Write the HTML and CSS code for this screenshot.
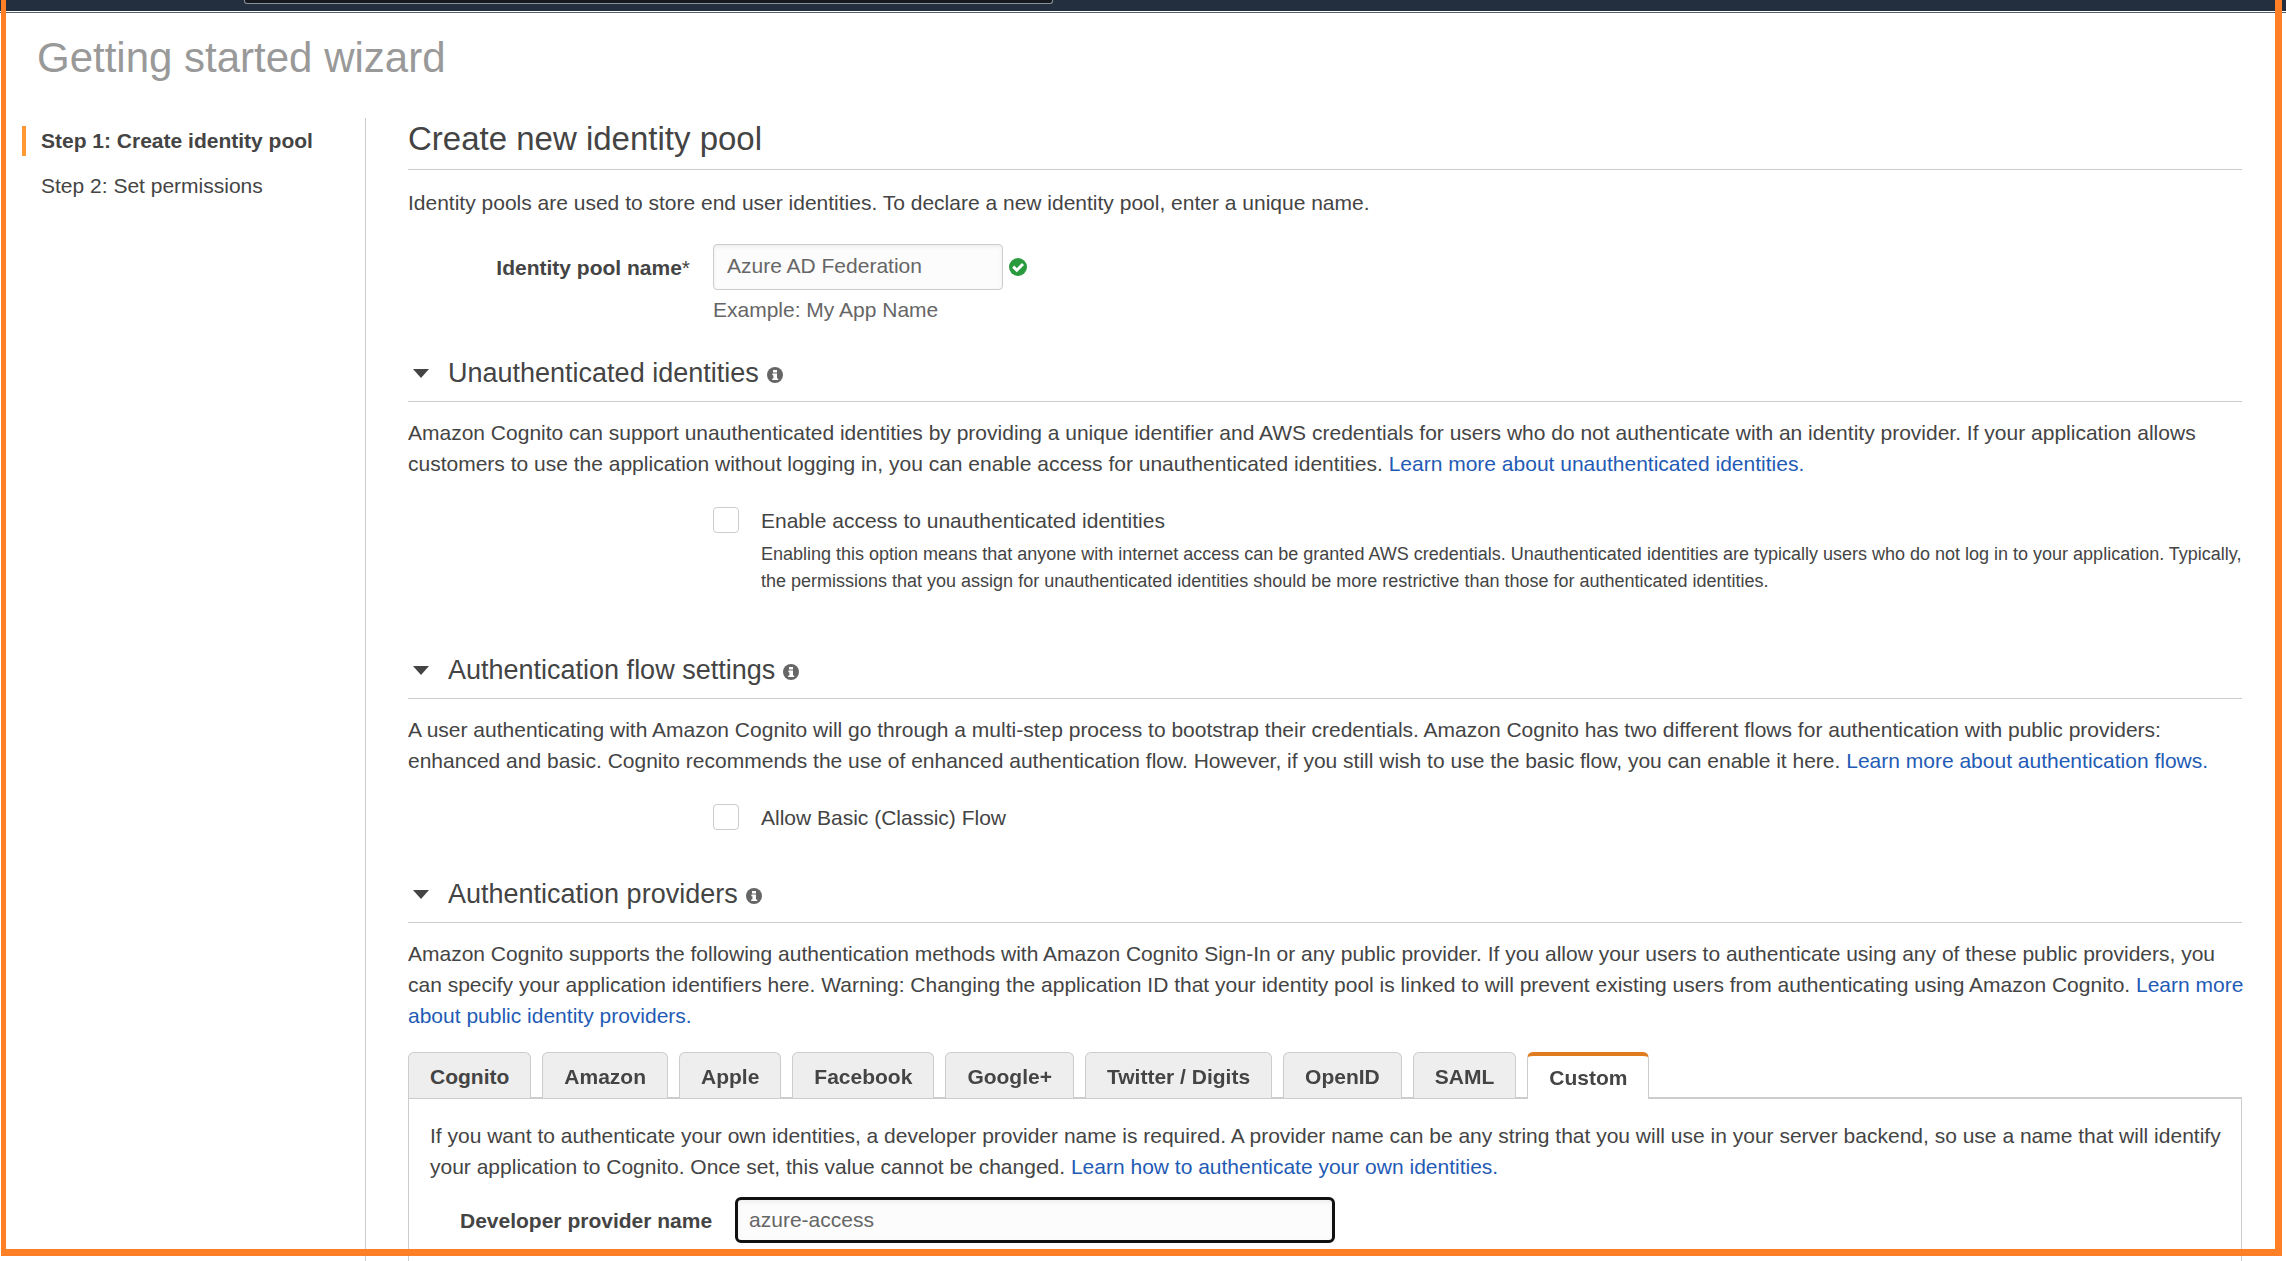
FILE: index.html
```html
<!DOCTYPE html>
<html lang="en">
<head>
<meta charset="utf-8">
<meta name="viewport" content="width=device-width, initial-scale=1">
<title>Getting started wizard</title>
<link rel="stylesheet" href="styles.css">
</head>
<body>
<svg class="sprite" aria-hidden="true">
  <symbol id="info" viewBox="0 0 16 16">
    <circle cx="8" cy="8" r="8" fill="#666"/>
    <path d="M6 3h4v2.6H6zM5.4 6.6H10v4.8h1.2V13H5.2v-1.6h1.2V8.2h-1z" fill="#fff"/>
  </symbol>
  <symbol id="caret" viewBox="0 0 16 9">
    <path d="M0 0h16L8 9z" fill="#444"/>
  </symbol>
</svg>
<header class="topbar"><div class="search"></div></header>
<div class="page">
  <h1 class="page-title">Getting started wizard</h1>
  <div class="columns">
    <nav class="steps">
      <a class="step current" href="#step1">Step 1: Create identity pool</a>
      <a class="step" href="#step2">Step 2: Set permissions</a>
    </nav>
    <main class="content">
      <h2 class="main-title">Create new identity pool</h2>
      <p class="text intro">Identity pools are used to store end user identities. To declare a new identity pool, enter a unique name.</p>
      <div class="field">
        <label class="label" for="pool">Identity pool name<span class="required">*</span></label>
        <div class="control">
          <div class="input-row">
            <input class="input" id="pool" type="text" value="Azure AD Federation">
            <svg class="valid" viewBox="0 0 18 18" role="img" aria-label="Valid"><circle cx="9" cy="9" r="9" fill="#2a9a3e"/><path d="M4.2 8.6l3.6 3.6 6.2-6.2" fill="none" stroke="#fff" stroke-width="3"/></svg>
          </div>
          <p class="hint">Example: My App Name</p>
        </div>
      </div>

      <section class="section">
        <h3 class="section-title"><svg class="caret"><use href="#caret"/></svg>Unauthenticated identities<svg class="info"><use href="#info"/></svg></h3>
        <p class="text">Amazon Cognito can support unauthenticated identities by providing a unique identifier and AWS credentials for users who do not authenticate with an identity provider. If your application allows customers to use the application without logging in, you can enable access for unauthenticated identities. <a class="link" href="#unauth">Learn more about unauthenticated identities.</a></p>
        <div class="option">
          <input class="check" id="unauth" type="checkbox">
          <div class="option-text">
            <label for="unauth">Enable access to unauthenticated identities</label>
            <p class="small">Enabling this option means that anyone with internet access can be granted AWS credentials. Unauthenticated identities are typically users who do not log in to your application. Typically, the permissions that you assign for unauthenticated identities should be more restrictive than those for authenticated identities.</p>
          </div>
        </div>
      </section>

      <section class="section flow">
        <h3 class="section-title"><svg class="caret"><use href="#caret"/></svg>Authentication flow settings<svg class="info"><use href="#info"/></svg></h3>
        <p class="text">A user authenticating with Amazon Cognito will go through a multi-step process to bootstrap their credentials. Amazon Cognito has two different flows for authentication with public providers: enhanced and basic. Cognito recommends the use of enhanced authentication flow. However, if you still wish to use the basic flow, you can enable it here. <a class="link" href="#flows">Learn more about authentication flows.</a></p>
        <div class="option">
          <input class="check" id="classic" type="checkbox">
          <div class="option-text"><label for="classic">Allow Basic (Classic) Flow</label></div>
        </div>
      </section>

      <section class="section providers">
        <h3 class="section-title"><svg class="caret"><use href="#caret"/></svg>Authentication providers<svg class="info"><use href="#info"/></svg></h3>
        <p class="text">Amazon Cognito supports the following authentication methods with Amazon Cognito Sign-In or any public provider. If you allow your users to authenticate using any of these public providers, you can specify your application identifiers here. Warning: Changing the application ID that your identity pool is linked to will prevent existing users from authenticating using Amazon Cognito. <a class="link" href="#public">Learn more about public identity providers.</a></p>
        <div class="tabs" role="tablist">
          <button class="tab" role="tab">Cognito</button>
          <button class="tab" role="tab">Amazon</button>
          <button class="tab" role="tab">Apple</button>
          <button class="tab" role="tab">Facebook</button>
          <button class="tab" role="tab">Google+</button>
          <button class="tab" role="tab">Twitter / Digits</button>
          <button class="tab" role="tab">OpenID</button>
          <button class="tab" role="tab">SAML</button>
          <button class="tab active" role="tab" aria-selected="true">Custom</button>
        </div>
        <div class="panel" role="tabpanel">
          <p class="text">If you want to authenticate your own identities, a developer provider name is required. A provider name can be any string that you will use in your server backend, so use a name that will identify your application to Cognito. Once set, this value cannot be changed. <a class="link" href="#own">Learn how to authenticate your own identities.</a></p>
          <div class="provider">
            <label class="label" for="developer">Developer provider name</label>
            <input class="input focused" id="developer" type="text" value="azure-access">
          </div>
        </div>
      </section>
    </main>
  </div>
</div>
<div class="frame" aria-hidden="true"></div>
</body>
</html>
```

FILE: styles.css
```css
* { box-sizing: border-box; }

body {
  display: flex;
  flex-direction: column;
  min-height: 100vh;
  margin: 0;
  background: #fff;
  color: #444;
  font: 21px/32px "Liberation Sans", Arial, sans-serif;
}

h1, h2, h3, p { margin: 0; font-weight: normal; }

.sprite { display: none; }

.topbar {
  height: 13px;
  padding: 0 244px;
  background: linear-gradient(#232f3e 11px, #fff 11px, #fff 12px, #545b6b 12px);
}

.search {
  width: 45%;
  height: 4px;
  border: 1px solid #879596;
  border-top: 0;
  border-radius: 0 0 3px 3px;
  background: #16191f;
}

.page {
  display: flex;
  flex: 1;
  flex-direction: column;
  padding: 21px 44px 0 22px;
}

.page-title {
  padding-left: 15px;
  color: #999;
  font-size: 42px;
  line-height: 48px;
}

.columns {
  display: flex;
  flex: 1;
  padding-top: 36px;
}

.steps {
  display: flex;
  flex: none;
  flex-direction: column;
  align-items: flex-start;
  gap: 15px;
  width: 344px;
  padding-top: 8px;
  border-right: 1px solid #ccc;
}

.step {
  padding-left: 15px;
  border-left: 4px solid transparent;
  color: #444;
  line-height: 30px;
  text-decoration: none;
}

.step.current { border-color: #f93; font-weight: bold; }

.content {
  display: flex;
  flex: 1;
  flex-direction: column;
  min-width: 0;
  padding-left: 42px;
}

.main-title {
  padding-bottom: 10px;
  border-bottom: 1px solid #ccc;
  font-size: 33px;
  line-height: 41px;
}

/* Paragraphs run slightly past the rule on the right */
.text { margin-right: -6px; line-height: 31px; }

.intro { padding-top: 17px; }

.field {
  display: grid;
  grid-template-columns: 282px 1fr;
  column-gap: 23px;
  padding-top: 26px;
}

.label { font-weight: bold; line-height: 48px; text-align: right; }
.required { font-weight: normal; }

.input-row { display: flex; align-items: center; gap: 6px; }

.input {
  width: 290px;
  height: 46px;
  padding: 0 13px 2px;
  border: 1px solid #ccc;
  border-radius: 4px;
  background: #fcfcfc;
  box-shadow: inset 0 2px 4px #eee;
  color: #666;
  font: inherit;
}

.input.focused {
  width: 600px;
  padding: 0 11px;
  border: 3px solid #111;
  border-radius: 6px;
}

.valid { width: 18px; height: 18px; }

.hint { padding-top: 4px; color: #666; }

.section { padding-top: 31px; }
.flow { padding-top: 59px; }
.providers { display: flex; flex: 1; flex-direction: column; padding-top: 46px; }

.section-title {
  display: flex;
  align-items: center;
  margin-bottom: 15px;
  padding: 0 0 12px 5px;
  border-bottom: 1px solid #ccc;
  font-size: 27px;
  line-height: 32px;
}

.caret { width: 16px; height: 9px; margin-right: 19px; }
.info { width: 16px; height: 16px; margin: 4px 0 0 8px; }

.link { color: #1f5bb5; text-decoration: none; }

.option {
  display: flex;
  align-items: flex-start;
  gap: 22px;
  padding: 28px 0 0 305px;
}

.check {
  appearance: none;
  flex: none;
  width: 26px;
  height: 26px;
  margin: 0;
  border: 1px solid #ccc;
  border-radius: 4px;
  background: #fff;
}

.option-text { line-height: 28px; }
.small { padding-top: 6px; font-size: 18px; line-height: 27px; }

.tabs {
  display: flex;
  gap: 11px;
  padding-top: 21px;
}

.tab {
  z-index: 1;
  height: 46px;
  margin: 0 0 -1px;
  padding: 3px 21px 0;
  border: 1px solid #ccc;
  border-bottom: 0;
  border-radius: 6px 6px 0 0;
  background: #eee;
  color: #444;
  font: bold 21px/32px "Liberation Sans", Arial, sans-serif;
}

.tab.active {
  height: 47px;
  margin-bottom: -2px;
  padding-top: 0;
  border-top: 4px solid #e07b1f;
  background: #fff;
}

.panel {
  flex: 1;
  padding: 21px 21px 0;
  border: solid #ccc;
  border-width: 2px 1px 0;
}

.provider { display: flex; gap: 23px; padding: 15px 0 12px 30px; }

/* Highlight outline drawn over the whole window */
.frame {
  position: fixed;
  inset: 0 4px 5px 1px;
  border: solid #ff7f27;
  border-width: 0 7px 7px 5px;
  pointer-events: none;
}
```
